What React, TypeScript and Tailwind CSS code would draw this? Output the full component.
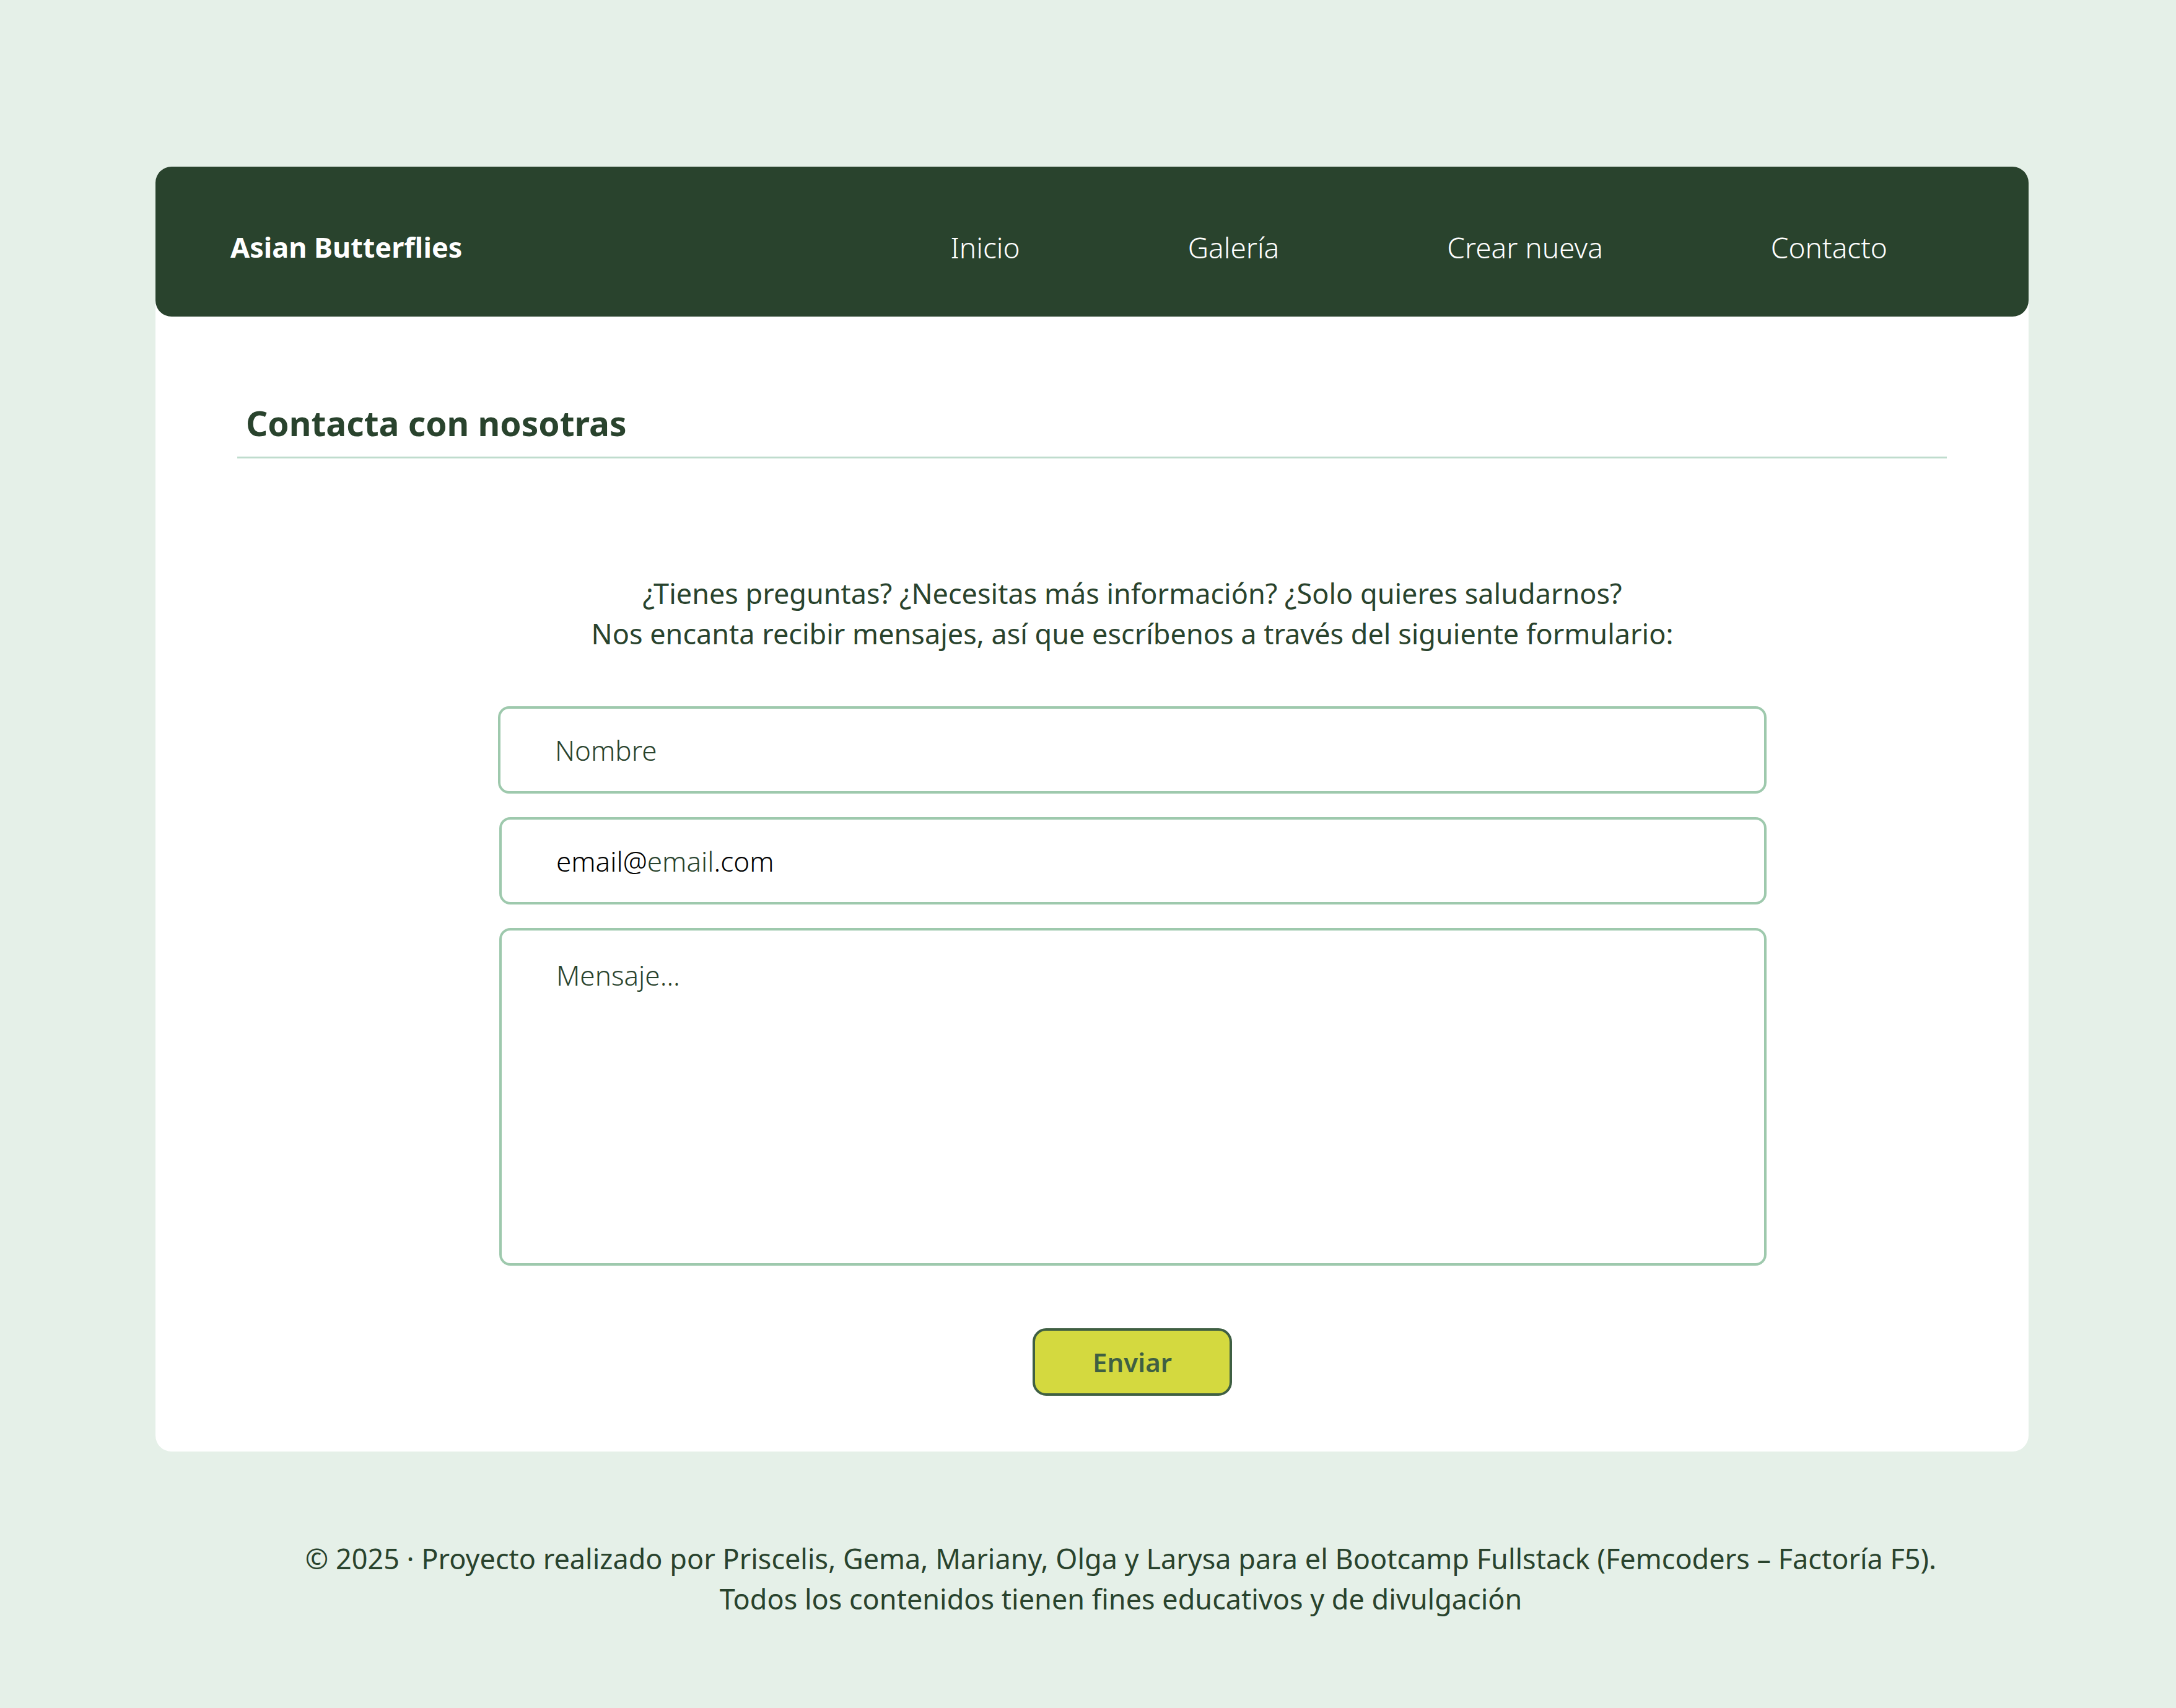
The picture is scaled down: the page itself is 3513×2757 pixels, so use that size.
import React from "react";

const navLinks = ["Inicio", "Galería", "Crear nueva", "Contacto"];

function Header() {
  return (
    <header className="flex h-[242px] items-center justify-between rounded-[26px] bg-[#29432d] pl-[121px] pr-[228px] pt-[18px]">
      <h1 className="text-[45px] font-bold text-white">Asian Butterflies</h1>
      <nav className="flex items-center gap-[271px]">
        {navLinks.map((link) => (
          <a
            key={link}
            href="#"
            className="text-[46px] font-light text-white"
          >
            {link}
          </a>
        ))}
      </nav>
    </header>
  );
}

function ContactForm() {
  return (
    <form
      className="flex w-[2048px] flex-col"
      onSubmit={(e) => e.preventDefault()}
    >
      <input
        type="text"
        placeholder="Nombre"
        className="h-[141px] rounded-[18px] border-4 border-[#9ec9ad] pl-[88px] text-[44px] font-light text-[#29432d] outline-none placeholder:text-[#29432d]"
      />
      <div className="ml-[2px] mt-[38px] flex h-[141px] items-center rounded-[18px] border-4 border-[#9ec9ad] pl-[88px] text-[44px] font-light">
        <span className="text-black">email@</span>
        <span className="text-[#29432d]">email</span>
        <span className="text-black">.com</span>
      </div>
      <textarea
        placeholder="Mensaje..."
        className="ml-[2px] mt-[38px] h-[545px] resize-none rounded-[18px] border-4 border-[#9ec9ad] pl-[88px] pt-[39px] text-[44px] font-light text-[#29432d] outline-none placeholder:text-[#29432d]"
      />
      <button
        type="submit"
        className="mx-auto mt-[101px] h-[109px] w-[322px] rounded-[22px] border-4 border-[#3f5f43] bg-[#d4d93f] text-[42px] font-semibold text-[#3f5f43]"
      >
        Enviar
      </button>
    </form>
  );
}

export default function App() {
  return (
    <div
      className="min-h-screen bg-[#e5f0e8] pb-[160px] pt-[269px]"
      style={{ fontFamily: '"Noto Sans", "Open Sans", sans-serif' }}
    >
      <main className="ml-[251px] w-[3024px] rounded-[26px] bg-white pb-[90px]">
        <Header />
        <section className="px-[132px] pt-[132px]">
          <h2 className="border-b-[3px] border-[#bfdccd] pb-[14px] pl-[14px] text-[55px] font-bold leading-[80px] text-[#29432d]">
            Contacta con nosotras
          </h2>
          <div className="ml-[421px] mt-[185px] w-[2048px]">
            <p className="text-center text-[45px] leading-[65px] text-[#29432d]">
              ¿Tienes preguntas? ¿Necesitas más información? ¿Solo quieres
              saludarnos?
              <br />
              Nos encanta recibir mensajes, así que escríbenos a través del
              siguiente formulario:
            </p>
            <div className="mt-[85px]">
              <ContactForm />
            </div>
          </div>
        </section>
      </main>
      <footer className="pl-[106px] pt-[140px] text-center text-[45px] leading-[65px] text-[#29432d]">
        <p>
          © 2025 · Proyecto realizado por Priscelis, Gema, Mariany, Olga y
          Larysa para el Bootcamp Fullstack (Femcoders – Factoría F5).
        </p>
        <p>Todos los contenidos tienen fines educativos y de divulgación</p>
      </footer>
    </div>
  );
}
